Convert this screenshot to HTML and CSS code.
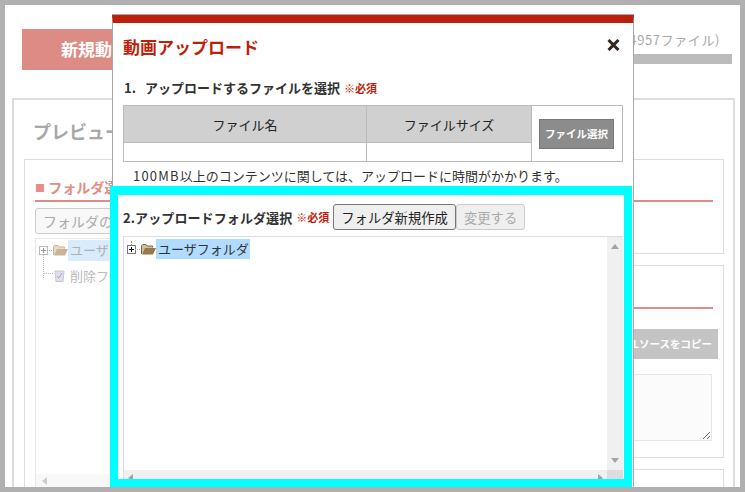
FILE: index.html
```html
<!DOCTYPE html>
<html lang="ja">
<head>
<meta charset="utf-8">
<title>動画アップロード</title>
<link rel="stylesheet" href="styles.css">
</head>
<body>
<div class="window">
  <header class="top">
    <div class="new-btn">新規動画アップロード</div>
    <div class="usage">
      <div class="usage-text">(4957ファイル)</div>
      <div class="usage-bar"></div>
    </div>
  </header>
  <main class="panel">
    <h2 class="panel-title">プレビュー</h2>
    <div class="columns">
      <section class="card card-left">
        <h3 class="sec-title"><span class="sq">■</span> フォルダ選択</h3>
        <input class="search" placeholder="フォルダの検索">
        <div class="bg-tree">
          <div class="bg-row">
            <span class="plus plus-light"></span>
            <svg class="folder" viewBox="0 0 15 11"><path d="M.5 10V1.500L1.500.5h3.500l1 1.500h5.500v1.500" fill="#e6dccb" stroke="#c9b596"/><path d="M1 10.500l3-6.500h11l-3 6.500z" fill="#c9b596"/></svg>
            <span class="bg-sel">ユーザフォルダ</span>
          </div>
          <div class="bg-row bg-row2">
            <svg class="trash" viewBox="0 0 11 13"><path d="M1 2h9l-1 10.500H2z" fill="#dfe0ee" stroke="#c8c8d0"/><path d="M3 7l2 2 3-5" stroke="#aab" fill="none"/></svg>
            <span class="bg-label">削除フォルダ</span>
          </div>
          <div class="bg-hscroll"><span class="arr arr-l"></span></div>
        </div>
      </section>
      <div class="right-col">
        <section class="card card-r1">
          <h3 class="sec-title">ファイル</h3>
        </section>
        <section class="card card-r2">
          <h3 class="sec-title">ソース</h3>
          <div class="copy-row"><div class="copy-btn">HTMLソースをコピー</div></div>
          <textarea class="src"></textarea>
        </section>
        <section class="card card-r3"></section>
      </div>
    </div>
  </main>

  <div class="modal">
    <h1 class="modal-title">動画アップロード
      <svg class="close" viewBox="0 0 13 12"><path d="M1.500 1l10 10M11.500 1l-10 10" stroke="#33281f" stroke-width="3" fill="none"/></svg>
    </h1>
    <div class="step1"><span class="step-num">1.</span>アップロードするファイルを選択 <span class="req req1">※必須</span></div>
    <table class="files">
      <tr>
        <th class="c1">ファイル名</th>
        <th class="c2">ファイルサイズ</th>
        <td class="c3" rowspan="2"><span class="pick">ファイル選択</span></td>
      </tr>
      <tr class="empty"><td></td><td></td></tr>
    </table>
    <p class="note"><span class="latin">100MB</span>以上のコンテンツに関しては、アップロードに時間がかかります。</p>
    <div class="step2">
      <span class="step2-label">2.アップロードフォルダ選択</span>
      <span class="req">※必須</span>
      <button class="btn">フォルダ新規作成</button><button class="btn" disabled>変更する</button>
    </div>
    <div class="tree">
      <div class="tree-main">
        <div class="tree-row">
          <span class="plus"></span>
          <svg class="folder" viewBox="0 0 15 11"><path d="M.5 10V1.500L1.500.5h3.500l1 1.500h5.500v1.500" fill="#cdbfa6" stroke="#7c6644"/><path d="M1 10.500l3-6.500h11l-3 6.500z" fill="#967746"/></svg>
          <span class="sel">ユーザフォルダ</span>
        </div>
      </div>
      <div class="vscroll"><span class="arr arr-u"></span><span class="arr arr-d"></span></div>
      <div class="hscroll"><span class="arr arr-l"></span><span class="arr arr-r"></span></div>
      <div class="corner"></div>
    </div>
  </div>
  <div class="highlight"></div>
</div>
</body>
</html>
```
FILE: styles.css
```css
* { box-sizing: border-box; }
html, body { margin: 0; padding: 0; }
body { background: #fff; font-family: "Noto Sans CJK JP", "Noto Sans", sans-serif; }

.window {
  position: relative;
  width: 745px;
  height: 492px;
  border: 5px solid #b0b0b0;
  overflow: hidden;
  background: #fff;
}

/* page behind the dialog */
.top {
  display: flex;
  justify-content: space-between;
  padding: 24px 8px 0 17px;
  height: 93px;
}
.new-btn {
  width: 300px;
  height: 41px;
  padding-left: 39px;
  background: #dc8c84;
  color: #fff;
  font-size: 17px;
  font-weight: 700;
  line-height: 40px;
  white-space: nowrap;
  overflow: hidden;
}
.usage { width: 300px; }
.usage-text {
  margin-top: 1px;
  height: 24px;
  padding-right: 12px;
  text-align: right;
  font-size: 13px;
  letter-spacing: .6px;
  line-height: 20px;
  color: #a8a8a8;
}
.usage-bar { height: 10px; background: #bcbcbc; }

.panel {
  margin: 0 0 0 7px;
  width: 723px;
  height: 400px;
  padding: 0 10px;
  border: 2px solid #ddd;
}
.panel-title {
  margin: 0;
  height: 59px;
  padding: 18px 0 0 9px;
  font-size: 18px;
  line-height: 26px;
  font-weight: 700;
  color: #a8a8a8;
}
.columns { display: grid; grid-template-columns: 346px 344px; gap: 10px; }
.card { border: 1px solid #ddd; padding: 0 10px; }
.card-left { height: 340px; padding-right: 10px; }
.right-col { display: flex; flex-direction: column; gap: 11px; }
.card-r1 { height: 95px; }
.card-r2 { height: 193px; }
.card-r3 { height: 60px; }
.sec-title {
  margin: 16px 0 0;
  height: 26px;
  border-bottom: 2px solid #dc8c84;
  font-size: 14px;
  line-height: 22px;
  font-weight: 700;
  color: #e08e86;
}
.card-r2 .sec-title { height: 27px; margin-top: 16px; }
.sq { font-size: 10px; vertical-align: 1px; }
.search {
  display: block;
  width: 100%;
  height: 26px;
  margin-top: 6px;
  padding: 0 7px;
  border: 1px solid #ccc;
  border-radius: 3px;
  background: #f8f8f8;
  font: 14px "Noto Sans CJK JP", sans-serif;
}
.search::placeholder { color: #aaa; }
.bg-tree {
  position: relative;
  margin-top: 4px;
  height: 250px;
  border-top: 1px solid #e8e8e8;
  border-left: 1px solid #e8e8e8;
}
.bg-row { position: relative; display: flex; align-items: center; height: 21px; margin-top: 1px; padding-left: 3px; }
.bg-row .folder { margin-left: 5px; }
.plus-light::before {
  content: "";
  position: absolute;
  left: 3px;
  top: 8px;
  width: 10px;
  height: 23px;
  border-left: 1px dotted #bbb;
}
.bg-row2::before {
  content: "";
  position: absolute;
  left: 8px;
  top: 8px;
  width: 9px;
  border-top: 1px dotted #bbb;
}
.bg-sel {
  height: 21px;
  padding: 0 2px;
  background: #d8ecfd;
  color: #b0b0b0;
  font-size: 13px;
  line-height: 20px;
  white-space: nowrap;
}
.bg-row2 { margin-top: 4px; padding-left: 18px; }
.trash { width: 11px; height: 13px; margin-right: 5px; }
.bg-label { color: #bbb; font-size: 13px; white-space: nowrap; }
.bg-hscroll {
  position: absolute;
  left: 0;
  right: 0;
  bottom: 0;
  height: 14px;
  background: #f8f8f8;
}
.bg-hscroll .arr-l { left: 6px; top: 3px; border-right-color: #ccc; }

.copy-row { display: flex; justify-content: flex-end; margin: 20px -5px 0 0; }
.copy-btn {
  width: 160px;
  height: 30px;
  padding-right: 6px;
  text-align: right;
  background: #c4c4c4;
  color: #fff;
  font-size: 10.500px;
  font-weight: 700;
  line-height: 29px;
  white-space: nowrap;
}
.src {
  display: block;
  width: calc(100% - 1px);
  height: 67px;
  margin-top: 15px;
  border: 1px solid #e6e6e6;
  background: #fbfbfb;
}

/* dialog */
.modal {
  position: absolute;
  left: 107px;
  top: 10px;
  width: 522px;
  height: 480px;
  padding: 0 10px;
  background: #fff;
  border: 1px solid #a8a8a8;
  border-top: 8px solid #bd1f0b;
  box-shadow: 0 -1px 0 #a8a8a8;
}
.modal-title {
  position: relative;
  margin: 0;
  height: 54px;
  padding-top: 11px;
  font-size: 17px;
  line-height: 26px;
  font-weight: 700;
  color: #bd1f0b;
}
.close { position: absolute; right: 3px; top: 16px; width: 13px; height: 12px; }
.step1 {
  height: 28px;
  padding: 1px 0 0 1px;
  font-size: 13px;
  line-height: 20px;
  font-weight: 700;
  color: #333;
}
.step-num { display: inline-block; width: 21px; }
.req { font-size: 11px; font-weight: 700; color: #bd1f0b; }
.req1 { margin-left: 1px; }
.files {
  width: 500px;
  border-collapse: collapse;
  table-layout: fixed;
  font-size: 13px;
}
.files th, .files td { border: 1px solid #bbb; padding: 0; }
.files th {
  height: 37px;
  background: #d0d0d0;
  font-weight: 400;
  color: #222;
  text-align: center;
}
.c1 { width: 243px; }
.c2 { width: 165px; }
.files .c3 { text-align: center; vertical-align: middle; }
.empty td { height: 19px; }
.pick {
  display: inline-block;
  width: 75px;
  height: 30px;
  margin-left: -1px;
  border: 1px solid #777;
  background: #8c8c8c;
  color: #fff;
  font-size: 10.500px;
  font-weight: 700;
  line-height: 28px;
  vertical-align: middle;
}
.note {
  margin: 0;
  height: 42px;
  padding: 4px 0 0 10px;
  font-size: 13px;
  line-height: 20px;
  color: #333;
}
.latin { letter-spacing: 1.200px; }
.step2 { display: flex; align-items: center; height: 26px; }
.step2-label { font-size: 13px; font-weight: 700; color: #333; white-space: nowrap; letter-spacing: .1px; }
.step2 .req { margin-left: 4px; margin-right: 4px; }
.btn {
  height: 26px;
  padding: 0 7px;
  border: 1px solid #767676;
  border-radius: 3px;
  background: #efefef;
  color: #222;
  font: 13.330px "Noto Sans CJK JP", sans-serif;
  white-space: nowrap;
}
.btn:disabled { border-color: #ccc; color: #aaa; }
.tree {
  display: grid;
  grid-template-columns: 483px 16px;
  grid-template-rows: 233px 20px;
  width: 500px;
  margin-top: 6px;
  border-top: 1px solid #ddd;
  border-left: 1px solid #ddd;
}
.tree-main { padding: 2px 0 0 3px; }
.tree-row { display: flex; align-items: center; height: 20px; }
.plus {
  position: relative;
  flex: none;
  width: 9px;
  height: 9px;
  border: 1px solid #777;
  background:
    linear-gradient(#000, #000) center / 5px 1px no-repeat,
    linear-gradient(#000, #000) center / 1px 5px no-repeat,
    #fff;
}
.plus::after {
  content: "";
  position: absolute;
  left: 7px;
  top: 3px;
  width: 5px;
  border-top: 1px dotted #aaa;
}
.tree-row .plus::before {
  content: "";
  position: absolute;
  left: 3px;
  top: -5px;
  height: 4px;
  border-left: 1px dotted #888;
}
.plus-light { border-color: #bbb; background:
    linear-gradient(#999, #999) center / 5px 1px no-repeat,
    linear-gradient(#999, #999) center / 1px 5px no-repeat,
    #fff; }
.tree-row .folder { margin-left: 5px; }
.folder { flex: none; width: 15px; height: 11px; }
.sel {
  height: 20px;
  padding: 0 1px 0 2px;
  background: #b0dcff;
  color: #333;
  font-size: 13px;
  line-height: 20px;
  white-space: nowrap;
}
.vscroll, .hscroll { position: relative; background: #f0f0f0; }
.corner { background: #dcdcdc; }
.arr { position: absolute; width: 0; height: 0; border: 4px solid transparent; }
.arr-u { left: 4px; top: 7px; border-top: 0; border-bottom: 5px solid #a3a3a3; }
.arr-d { left: 4px; bottom: 7px; border-bottom: 0; border-top: 5px solid #a3a3a3; }
.arr-l { left: 4px; top: 4px; border-left: 0; border-right: 5px solid #a3a3a3; }
.arr-r { right: 4px; top: 4px; border-right: 0; border-left: 5px solid #a3a3a3; }

.highlight {
  position: absolute;
  left: 105px;
  top: 181px;
  width: 522px;
  height: 301px;
  border: solid #00ffff;
  border-width: 9px 8px 8px 8px;
  pointer-events: none;
}
```
